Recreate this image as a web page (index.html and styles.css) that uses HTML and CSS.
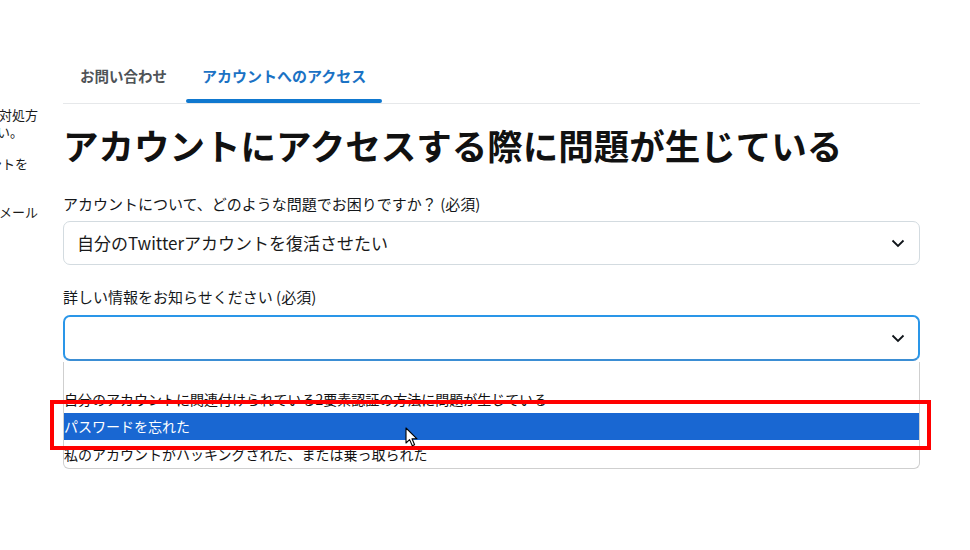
FILE: index.html
```html
<!DOCTYPE html>
<html lang="ja">
<head>
<meta charset="utf-8">
<title>アカウントへのアクセス</title>
<link rel="stylesheet" href="styles.css">
</head>
<body>
<div class="page">
  <aside class="side">
    <div class="sl l1">の対処方</div>
    <div class="sl l2">さい。</div>
    <div class="sl"></div>
    <div class="sl l3">ウントを</div>
    <div class="sl"></div>
    <div class="sl"></div>
    <div class="sl l4">メール</div>
  </aside>
  <main class="main">
    <nav class="tabs">
      <div class="tab">お問い合わせ</div>
      <div class="tab active">アカウントへのアクセス</div>
    </nav>
    <h1 class="title">アカウントにアクセスする際に問題が生じている</h1>
    <div class="field">
      <div class="label">アカウントについて、どのような問題でお困りですか？ <span class="req">(必須)</span></div>
      <div class="select">
        <span class="value">自分のTwitterアカウントを復活させたい</span>
        <svg class="chev" width="14" height="9" viewBox="0 0 14 9"><path d="M1.5 1.5 L7 7 L12.5 1.5" fill="none" stroke="#0f1419" stroke-width="1.8"/></svg>
      </div>
    </div>
    <div class="field second">
      <div class="label">詳しい情報をお知らせください <span class="req">(必須)</span></div>
      <div class="select focused">
        <span class="value"></span>
        <svg class="chev" width="14" height="9" viewBox="0 0 14 9"><path d="M1.5 1.5 L7 7 L12.5 1.5" fill="none" stroke="#0f1419" stroke-width="1.8"/></svg>
      </div>
      <div class="list">
        <div class="opt clipped"><span class="clip"><span>自分のアカウントに関連付けられている2要素認証の方法に問題が生じている</span></span></div>
        <div class="opt hl">パスワードを忘れた</div>
        <div class="opt">私のアカウントがハッキングされた、または乗っ取られた</div>
        <div class="mark"></div>
        <svg class="cursor" width="14" height="21" viewBox="0 0 14 21"><path d="M1 1 L1 16 L4.6 12.6 L7.3 18.8 L9.6 17.8 L7 11.8 L12 11.8 Z" fill="#fff" stroke="#000" stroke-width="1.1" stroke-linejoin="round"/></svg>
      </div>
    </div>
  </main>
</div>
</body>
</html>
```
FILE: styles.css
```css
html, body {
  margin: 0;
  padding: 0;
  background: #fff;
}
body {
  font-family: "Noto Sans CJK JP", "Noto Sans", sans-serif;
  color: #0f1419;
  width: 970px;
  height: 550px;
  overflow: hidden;
}
.page {
  display: flex;
  gap: 23px;
}
.side {
  width: 40px;
  flex: none;
  overflow: hidden;
  padding-top: 107px;
  font-size: 13px;
  color: #1a1a1a;
}
.sl {
  height: 16px;
  line-height: 16px;
  white-space: nowrap;
}
.l1 { margin-left: -14px; }
.l2 { margin-left: -16px; margin-top: 1px; }
.l3 { margin-left: -24px; }
.l4 { margin-left: -1px; }

.main {
  width: 857px;
  flex: none;
  padding-top: 55px;
}
.tabs {
  display: flex;
  gap: 2px;
  border-bottom: 1px solid #e6e8ea;
}
.tab {
  position: relative;
  padding: 11px 17px 17px;
  font-size: 14.5px;
  line-height: 20px;
  font-weight: 700;
  color: #4f5357;
}
.tab.active {
  color: #1b72c4;
  font-size: 15px;
  padding: 11px 16px 17px;
}
.tab.active::after {
  content: "";
  position: absolute;
  left: 0;
  right: 0;
  bottom: 0;
  height: 4px;
  border-radius: 2px;
  background: #0f78cf;
}
.title {
  margin: 19px 0 0;
  font-size: 35.5px;
  line-height: 43px;
  font-weight: 700;
  color: #111;
  letter-spacing: 0;
}
.field {
  margin-top: 28px;
}
.field.second {
  margin-top: 22px;
  position: relative;
}
.label {
  font-size: 15px;
  line-height: 20px;
  color: #14171a;
}
.req {
  font-family: "Noto Sans CJK JP", sans-serif;
}
.select {
  margin-top: 7px;
  height: 42px;
  border: 1px solid #d3dbe0;
  border-radius: 7px;
  display: flex;
  align-items: center;
  justify-content: space-between;
  padding: 0 14px 0 13px;
}
.select.focused {
  margin-top: 8px;
  height: 42px;
  border: 2px solid #2a96e8;
  border-bottom-color: #3b8ed4;
  padding: 0 13px 0 12px;
}
.value {
  font-size: 17px;
  line-height: 24px;
  color: #1a1a1a;
}
.chev {
  display: block;
}
.list {
  position: relative;
  margin-top: 1px;
  border: 1px solid #cfcfcf;
  border-top: none;
  border-radius: 0 0 6px 6px;
  padding-top: 23px;
  height: 83px;
}
.opt {
  height: 28px;
  line-height: 28px;
  font-size: 14px;
  color: #111;
  white-space: nowrap;
  overflow: hidden;
}
.opt.hl {
  height: 27px;
  line-height: 27px;
  background: #1967d2;
  color: #fff;
}
.opt.clipped {
  position: relative;
}
.clip {
  position: absolute;
  left: 0;
  top: 8px;
  height: 16px;
  overflow: hidden;
  line-height: 28px;
}
.clip span {
  display: block;
  margin-top: -8px;
}
.mark {
  position: absolute;
  left: -14px;
  right: -12px;
  top: 38px;
  height: 42px;
  border: 4px solid #ff0000;
}
.cursor {
  position: absolute;
  left: 341px;
  top: 65px;
}
```
